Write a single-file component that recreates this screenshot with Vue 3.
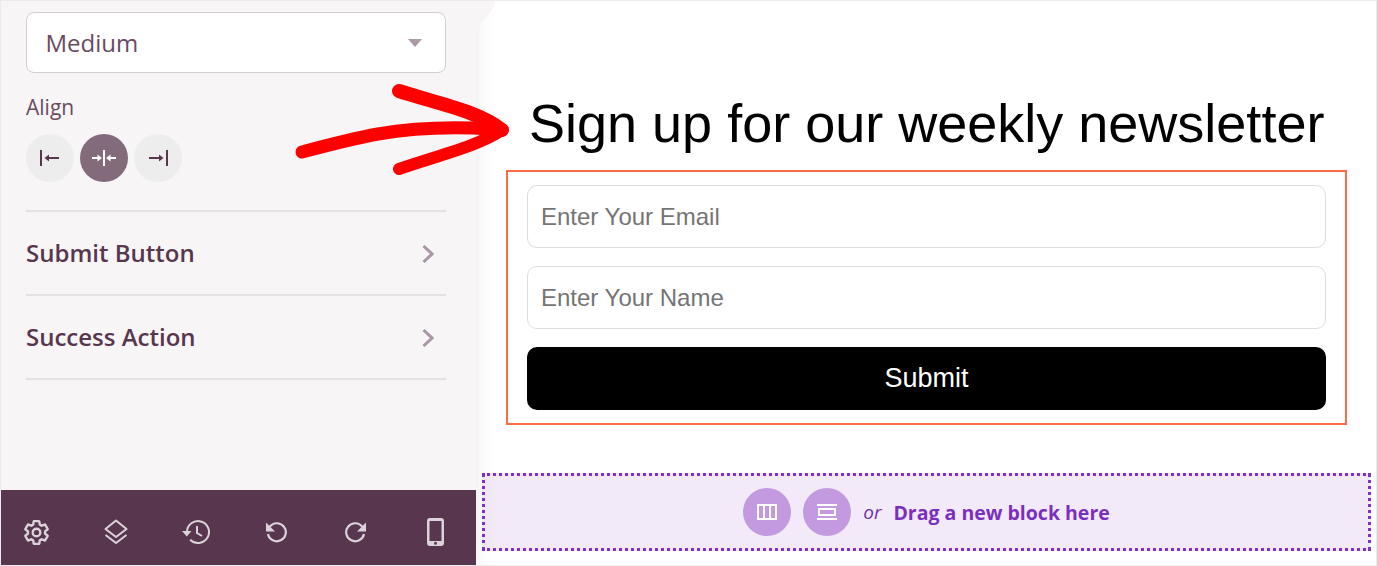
<script setup>
const rows = ['Submit Button', 'Success Action']
</script>

<template>
  <div class="page">
    <aside class="panel">
      <div class="panel-body">
        <div class="select">
          <span>Medium</span>
          <i class="caret"></i>
        </div>
        <div class="align-label">Align</div>
        <div class="align-row">
          <button class="round">
            <svg width="20" height="16" viewBox="0 0 20 16"><path d="M1 0v16" stroke="#58364e" stroke-width="2"/><path d="M19 8H8" stroke="#58364e" stroke-width="2"/><path d="M4.500 8 9 4.500v7z" fill="#58364e"/></svg>
          </button>
          <button class="round active">
            <svg width="24" height="16" viewBox="0 0 24 16"><path d="M12 0v16" stroke="#fff" stroke-width="2"/><path d="M0 8h6M24 8h-6" stroke="#fff" stroke-width="2"/><path d="M10 8 5.500 4.500v7zM14 8l4.500-3.500v7z" fill="#fff"/></svg>
          </button>
          <button class="round">
            <svg width="20" height="16" viewBox="0 0 20 16"><path d="M19 0v16" stroke="#58364e" stroke-width="2"/><path d="M1 8h11" stroke="#58364e" stroke-width="2"/><path d="M15.500 8 11 4.500v7z" fill="#58364e"/></svg>
          </button>
        </div>
        <div class="rows">
          <div v-for="r in rows" :key="r" class="row">
            <span class="row-label">{{ r }}</span>
            <svg width="12" height="18" viewBox="0 0 12 18"><path d="M1.500 1 10 9l-8.500 8" fill="none" stroke="#a996a4" stroke-width="3"/></svg>
          </div>
        </div>
      </div>
      <footer class="toolbar">
        <span class="cell">
          <svg width="25" height="27" viewBox="1.500 1 21 22" fill="none" stroke="#dbd3d9" stroke-width="2" stroke-linejoin="round"><path d="M19.140 12.940c.04-.3.06-.61.06-.94 0-.32-.02-.64-.07-.94l2.030-1.580a.49.49 0 0 0 .12-.61l-1.920-3.320a.488.488 0 0 0-.59-.22l-2.390.96c-.5-.38-1.030-.7-1.620-.94l-.36-2.540a.484.484 0 0 0-.48-.41h-3.840c-.24 0-.43.17-.47.41l-.36 2.540c-.59.24-1.130.57-1.620.94l-2.390-.96c-.22-.08-.47 0-.59.22L2.740 8.870c-.12.21-.08.47.12.61l2.030 1.580c-.05.3-.09.63-.09.94s.02.64.07.94l-2.030 1.580a.49.49 0 0 0-.12.61l1.920 3.320c.12.22.37.29.59.22l2.390-.96c.5.38 1.030.7 1.620.94l.36 2.540c.05.24.24.41.48.41h3.840c.24 0 .44-.17.47-.41l.36-2.540c.59-.24 1.130-.56 1.620-.94l2.390.96c.22.08.47 0 .59-.22l1.920-3.320c.12-.22.07-.47-.12-.61l-2.010-1.580z"/><circle cx="12" cy="12" r="3.200"/></svg>
        </span>
        <span class="cell">
          <svg width="26" height="26" viewBox="0 0 26 26" fill="none" stroke="#dbd3d9" stroke-width="2" stroke-linejoin="round"><path d="M13 1.500 23.500 10 13 18 2.500 10z"/><path d="M2.500 16 13 24l10.500-8"/></svg>
        </span>
        <span class="cell">
          <svg width="28" height="26" viewBox="0 0 28 26" fill="none" stroke="#dbd3d9" stroke-width="2"><path d="M5 13a11 11 0 1 1 3.200 7.800"/><path d="M0 12h9.500L4.800 17.500z" fill="#dbd3d9" stroke="none"/><path d="M15 7v7l5 3"/></svg>
        </span>
        <span class="cell">
          <svg width="22" height="22" viewBox="0 0 22 22" fill="none" stroke="#dbd3d9" stroke-width="2.200"><path d="M4.500 6A9 9 0 1 1 3 13"/><path d="M1 1.500V10.500H10z" fill="#dbd3d9" stroke="none"/></svg>
        </span>
        <span class="cell">
          <svg width="22" height="22" viewBox="0 0 22 22" fill="none" stroke="#dbd3d9" stroke-width="2.200"><path d="M17.500 6A9 9 0 1 0 19 13"/><path d="M21 1.500V10.500H12z" fill="#dbd3d9" stroke="none"/></svg>
        </span>
        <span class="cell phone">
          <svg width="17" height="28" viewBox="0 0 17 28"><path fill-rule="evenodd" d="M3 0h11a3 3 0 0 1 3 3v22a3 3 0 0 1-3 3H3a3 3 0 0 1-3-3V3a3 3 0 0 1 3-3zM2.500 3v20h12V3zM8.500 23.800a1.500 1.500 0 1 0 0 3 1.500 1.500 0 0 0 0-3z" fill="#dbd3d9"/></svg>
        </span>
      </footer>
    </aside>

    <main class="canvas">
      <h1 class="title">Sign up for our weekly newsletter</h1>
      <form class="form-box" @submit.prevent>
        <input class="field" placeholder="Enter Your Email" />
        <input class="field" placeholder="Enter Your Name" />
        <button class="submit">Submit</button>
      </form>
      <div class="drop">
        <span class="drop-btn">
          <svg width="20" height="16" viewBox="0 0 20 16" fill="none" stroke="#fff" stroke-width="2"><path d="M1 1h18v14H1zM7 1v14M13 1v14"/></svg>
        </span>
        <span class="drop-btn">
          <svg width="20" height="16" viewBox="0 0 20 16" fill="none" stroke="#fff" stroke-width="2"><path d="M0 1h20M0 15h20M2 5h16v6H2z"/></svg>
        </span>
        <em class="or">or</em>
        <strong class="drag">Drag a new block here</strong>
      </div>
    </main>

    <svg class="arrow" width="220" height="100" viewBox="0 0 220 100" fill="none" stroke="#ff0000" stroke-linecap="round">
      <path d="M10 72C40 64 64 58 86 54 120 48 150 47 182 48L210 50" stroke-width="13"/>
      <path d="M107 11C140 22 185 30 210 50" stroke-width="14"/>
      <path d="M107 89C140 77 185 67 210 50" stroke-width="12"/>
    </svg>
  </div>
</template>

<style>
html, body { margin: 0; padding: 0; background: #fff; overflow: hidden; }
</style>

<style scoped>
.page {
  position: relative;
  box-sizing: border-box;
  width: 1377px;
  height: 566px;
  display: flex;
  border: 1px solid #ebebeb;
  overflow: hidden;
  background: #fff;
}
.panel {
  position: relative;
  z-index: 1;
  width: 475px;
  flex: none;
  display: flex;
  flex-direction: column;
  background: #f7f5f6;
  box-shadow: 0 0 18px rgba(0, 0, 0, .09);
  font-family: "Open Sans", sans-serif;
  color: #58364e;
}
.panel::after {
  content: "";
  position: absolute;
  left: 475px;
  top: 0;
  width: 20px;
  height: 34px;
  background: #f7f5f6;
  clip-path: path("M0 0H19C17 9 12 15 6 20 2 24 0 29 0 34Z");
}
.panel-body { flex: 1; padding: 11px 30px 0 25px; }
.select {
  box-sizing: border-box;
  height: 61px;
  background: #fff;
  border: 1px solid #d6ccd3;
  border-radius: 8px;
  display: flex;
  align-items: center;
  justify-content: space-between;
  padding: 0 23px 0 18.500px;
  font-size: 24px;
  color: #694b61;
}
.caret {
  width: 0;
  height: 0;
  border-left: 7.500px solid transparent;
  border-right: 7.500px solid transparent;
  border-top: 8px solid #ab9ba7;
}
.align-label { margin-top: 21px; font-size: 21px; line-height: 27px; color: #694b61; }
.align-row { margin-top: 13px; display: flex; gap: 6px; }
.round {
  width: 48px;
  height: 48px;
  border: 0;
  border-radius: 50%;
  background: #eeeded;
  padding: 0;
  display: flex;
  align-items: center;
  justify-content: center;
}
.round.active { background: #846b7b; }
.rows { margin-top: 28px; border-top: 2px solid #e5e2e4; }
.row {
  box-sizing: border-box;
  height: 84px;
  border-bottom: 2px solid #e5e2e4;
  display: flex;
  align-items: center;
  justify-content: space-between;
  padding: 2px 12px 0 0;
  font-size: 24px;
  font-weight: 600;
  color: #58364e;
}
.row-label { margin-top: -4px; }
.toolbar {
  box-sizing: border-box;
  height: 75px;
  flex: none;
  background: #58364e;
  display: flex;
  align-items: center;
  gap: 40px;
  padding: 9px 0 0 15px;
}
.cell {
  width: 40px;
  display: flex;
  align-items: center;
  justify-content: center;
}
.cell.phone { margin-left: -1px; }
.canvas {
  flex: 1;
  min-width: 0;
  position: relative;
  background: #fff;
  display: flex;
  flex-direction: column;
  font-family: "Liberation Sans", Arial, sans-serif;
}
.title {
  margin: 89px 0 0;
  padding-left: 53px;
  font-size: 54px;
  line-height: 66px;
  font-weight: 400;
  color: #000;
  white-space: nowrap;
}
.form-box {
  box-sizing: border-box;
  width: 841px;
  height: 255px;
  margin: 14px 0 0 30px;
  border: 2px solid #ff6b45;
  padding: 13px 19px;
  display: flex;
  flex-direction: column;
  gap: 18px;
}
.field {
  box-sizing: border-box;
  height: 63px;
  flex: none;
  border: 1px solid #ddd;
  border-radius: 10px;
  padding: 0 13px;
  font: 24px "Liberation Sans", Arial, sans-serif;
  outline: none;
}
.field::placeholder { color: #757575; opacity: 1; }
.submit {
  height: 63px;
  flex: none;
  border: 0;
  border-radius: 10px;
  background: #000;
  color: #fff;
  font: 27px "Liberation Sans", Arial, sans-serif;
}
.drop {
  box-sizing: border-box;
  width: 889px;
  height: 78px;
  margin: 48px 0 0 6px;
  border: 3px dotted #8230c6;
  background: #f3eaf9;
  display: flex;
  align-items: center;
  justify-content: center;
  font-family: "Open Sans", sans-serif;
}
.drop-btn {
  width: 48px;
  height: 48px;
  border-radius: 50%;
  background: #c39ae0;
  display: flex;
  align-items: center;
  justify-content: center;
}
.drop-btn + .drop-btn { margin-left: 12px; }
.or { margin-left: 12px; font-size: 19px; color: #7030aa; }
.drag { margin-left: 12px; font-size: 19.500px; font-weight: 700; color: #7b2fbe; }
.arrow { position: absolute; left: 291px; top: 79px; z-index: 2; pointer-events: none; }
</style>
